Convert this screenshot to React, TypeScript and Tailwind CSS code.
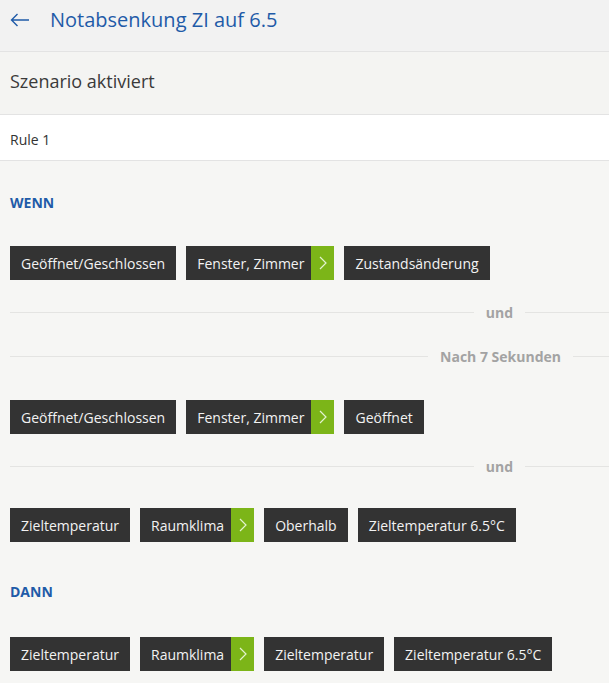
import React from 'react';

// ── Types ──
type Chip = { label: string; arrow?: boolean };

const rows: Record<string, Chip[]> = {
  a: [
    { label: 'Geöffnet/Geschlossen' },
    { label: 'Fenster, Zimmer', arrow: true },
    { label: 'Zustandsänderung' },
  ],
  b: [
    { label: 'Geöffnet/Geschlossen' },
    { label: 'Fenster, Zimmer', arrow: true },
    { label: 'Geöffnet' },
  ],
  c: [
    { label: 'Zieltemperatur' },
    { label: 'Raumklima', arrow: true },
    { label: 'Oberhalb' },
    { label: 'Zieltemperatur 6.5°C' },
  ],
  d: [
    { label: 'Zieltemperatur' },
    { label: 'Raumklima', arrow: true },
    { label: 'Zieltemperatur' },
    { label: 'Zieltemperatur 6.5°C' },
  ],
};

const ChipRow = ({ items, className }: { items: Chip[]; className?: string }) => (
  <div className={`flex gap-[10px] ${className ?? ''}`}>
    {items.map((c, i) => (
      <div key={i} className="flex h-[34px] bg-[#333333] text-[14px] text-[#f2f2f2]">
        <span className={`flex items-center pl-[11px] ${c.arrow ? 'pr-[7px]' : 'pr-[11px]'}`}>{c.label}</span>
        {c.arrow && (
          <span className="flex w-[23px] items-center justify-center bg-[#7cb518]">
            <svg width="8" height="14" viewBox="0 0 8 14" fill="none">
              <path d="M1 1l6 6-6 6" stroke="#e3f3cf" strokeWidth="1.2" />
            </svg>
          </span>
        )}
      </div>
    ))}
  </div>
);

const Divider = ({ label, right, className }: { label: string; right: string; className?: string }) => (
  <div className={`flex h-[20px] items-center ${className ?? ''}`}>
    <div className="h-px flex-1 bg-[#e4e4e2]" />
    <span className="px-[12px] text-[14px] font-bold text-[#a3a3a3]">{label}</span>
    <div className={`h-px bg-[#e4e4e2] ${right}`} />
  </div>
);

export default function App() {
  return (
    <div
      className="min-h-[683px] w-[609px] bg-[#f6f6f4] text-[#333]"
      style={{ fontFamily: '"Open Sans", "Liberation Sans", sans-serif' }}
    >
      {/* ── Header ── */}
      <div className="flex h-[52px] items-center border-b border-[#e3e3e3] bg-[#f2f2f2] pb-[11px]">
        <svg className="ml-[10px]" width="20" height="14" viewBox="0 0 20 14" fill="none">
          <path d="M19 7H1.5M7.5 1L1.5 7l6 6" stroke="#1f5ba8" strokeWidth="1.4" />
        </svg>
        <h1 className="ml-[20px] text-[20px] text-[#1f5ba8]">Notabsenkung ZI auf 6.5</h1>
      </div>

      {/* ── Status ── */}
      <div className="flex h-[63px] items-center border-b border-[#e3e3e3] bg-[#f4f4f2] px-[10px] pb-[3px] text-[18px] text-[#3a3a3a]">
        Szenario aktiviert
      </div>

      {/* ── Rule name ── */}
      <div className="flex h-[46px] items-center border-b border-[#e3e3e3] bg-white px-[10px] pt-[3px] text-[14px] text-[#333]">
        Rule 1
      </div>

      <div className="pb-[11px] pl-[10px]">
        <div className="mt-[32px] h-[20px] text-[14px] font-bold leading-[20px] text-[#1f5ba8]">WENN</div>
        <ChipRow items={rows.a} className="mt-[33px]" />
        <Divider label="und" right="w-[84px]" className="mt-[22px]" />
        <Divider label="Nach 7 Sekunden" right="w-[36px]" className="mt-[24px]" />
        <ChipRow items={rows.b} className="mt-[34px]" />
        <Divider label="und" right="w-[84px]" className="mt-[22px]" />
        <ChipRow items={rows.c} className="mt-[32px]" />
        <div className="mt-[40px] h-[20px] text-[14px] font-bold leading-[20px] text-[#1f5ba8]">DANN</div>
        <ChipRow items={rows.d} className="mt-[35px]" />
      </div>
    </div>
  );
}
